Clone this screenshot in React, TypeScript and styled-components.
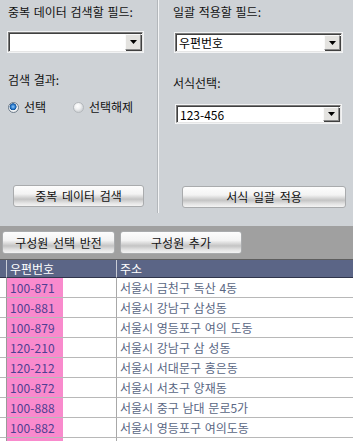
import React from "react";
import styled, { createGlobalStyle } from "styled-components";

const Global = createGlobalStyle`
  html, body { margin: 0; padding: 0; background: #ffffff; }
  * { box-sizing: border-box; }
`;

const FONT = `"Noto Sans CJK KR", "Noto Sans", sans-serif`;

const Page = styled.div`
  width: 353px;
  height: 441px;
  overflow: hidden;
  font-family: ${FONT};
  font-size: 12px;
  display: flex;
  flex-direction: column;
`;

const TopPanel = styled.div`
  height: 226px;
  flex: none;
  background: #ced2d6;
  display: grid;
  grid-template-columns: 157px 2px 1fr;
  align-items: start;
`;

const Pane = styled.div<{ $padLeft: number }>`
  display: flex;
  flex-direction: column;
  align-items: flex-start;
  padding: 5px 0 0 ${(p) => p.$padLeft}px;
`;

const Divider = styled.div`
  height: 213px;
  border-left: 1px solid #b3b7bb;
  border-right: 1px solid #f4f5f6;
`;

const Label = styled.div<{ $mt?: number; $ml?: number }>`
  margin-top: ${(p) => p.$mt ?? 0}px;
  margin-left: ${(p) => p.$ml ?? 0}px;
  line-height: 14px;
  height: 14px;
  color: #111;
  word-spacing: 1px;
  white-space: nowrap;
`;

const Combo = styled.div<{ $mt: number; $ml: number; $w: number; $h: number }>`
  margin-top: ${(p) => p.$mt}px;
  margin-left: ${(p) => p.$ml}px;
  width: ${(p) => p.$w}px;
  height: ${(p) => p.$h}px;
  background: #ffffff;
  border: 1px solid #7b7b7b;
  border-right-color: #e6e6e6;
  border-bottom-color: #e6e6e6;
  box-shadow: inset 1px 1px 0 #404040, 0 0 0 1px #f2f3f4;
  display: flex;
  align-items: stretch;
`;

const ComboText = styled.div`
  flex: 1;
  padding-left: 3px;
  color: #000;
  display: flex;
  align-items: center;
  white-space: nowrap;
`;

const DropBtn = styled.div`
  width: 16px;
  margin: 1px 1px 1px 0;
  background: #e4e3e0;
  border: 1px solid #8a8a8a;
  border-top-color: #fafafa;
  border-left-color: #fafafa;
  box-shadow: 1px 1px 0 #404040;
  display: flex;
  align-items: center;
  justify-content: center;
`;

const Arrow = () => (
  <svg width="7" height="4" viewBox="0 0 7 4">
    <polygon points="0,0 7,0 3.5,4" fill="#000" />
  </svg>
);

const RadioRow = styled.div`
  margin-top: 13px;
  display: flex;
  align-items: center;
  height: 14px;
`;

const RadioItem = styled.label<{ $w: number }>`
  display: flex;
  align-items: center;
  width: ${(p) => p.$w}px;
  gap: 5px;
  color: #111;
  line-height: 14px;
`;

const RadioDot = styled.span<{ $on: boolean }>`
  width: 11px;
  height: 11px;
  border-radius: 50%;
  border: 1px solid ${(p) => (p.$on ? "#6f7d8c" : "#b4b8bc")};
  background: ${(p) =>
    p.$on
      ? "radial-gradient(circle at 45% 42%, #8fcaff 0, #2a78c8 2.2px, #0b4f9a 3.2px, #f8f8f8 3.8px, #e2e4e6 5.5px)"
      : "radial-gradient(circle at 40% 35%, #ffffff 0, #f0f1f2 3px, #d2d5d8 5.5px)"};
  flex: none;
`;

const GlossButton = styled.div<{ $mt?: number; $ml?: number; $w: number; $h: number }>`
  margin-top: ${(p) => p.$mt ?? 0}px;
  margin-left: ${(p) => p.$ml ?? 0}px;
  width: ${(p) => p.$w}px;
  height: ${(p) => p.$h}px;
  border: 1px solid #a9abad;
  border-radius: 3px;
  background: linear-gradient(
    #fdfdfd 0%,
    #f3f3f3 40%,
    #d2d2d2 58%,
    #c4c4c4 66%,
    #e4e4e4 85%,
    #f4f4f4 100%
  );
  display: flex;
  align-items: center;
  justify-content: center;
  color: #111;
  line-height: 14px;
  word-spacing: 2px;
  white-space: nowrap;
  flex: none;
`;

const Toolbar = styled.div`
  height: 34px;
  flex: none;
  background: #a0a0a0;
  border-bottom: 1px solid #5e5e5e;
  display: flex;
  align-items: flex-start;
  gap: 5px;
  padding: 5px 2px 0;
`;

const Table = styled.div`
  display: grid;
  grid-template-columns: 7px 110px 1fr;
  grid-auto-rows: 20px;
  grid-template-rows: 18px;
`;

const HeadCell = styled.div<{ $last?: boolean }>`
  background: #5b6586;
  color: #ffffff;
  line-height: 17px;
  padding-left: 3px;
  border-right: ${(p) => (p.$last ? "none" : "1px solid #c9ccd6")};
  border-bottom: 1px solid #2f344a;
  white-space: nowrap;
`;

const RowHead = styled.div`
  background: #ffffff;
  border-right: 1px solid #9a9a9a;
  border-bottom: 1px solid #b8b8b8;
`;

const ZipCell = styled.div`
  background: #ffffff;
  border-right: 1px solid #a8a8a8;
  border-bottom: 1px solid #b8b8b8;
  display: flex;
`;

const ZipMark = styled.div`
  width: 56px;
  background: #f98acd;
  color: #4f3e92;
  padding-left: 3px;
  line-height: 19px;
  letter-spacing: 0.1px;
`;

const AddrCell = styled.div`
  background: #ffffff;
  color: #5a6784;
  border-bottom: 1px solid #b8b8b8;
  padding-left: 3px;
  line-height: 19px;
  word-spacing: 1px;
  white-space: nowrap;
`;

const rows = [
  ["100-871", "서울시 금천구 독산 4동"],
  ["100-881", "서울시 강남구 삼성동"],
  ["100-879", "서울시 영등포구 여의 도동"],
  ["120-210", "서울시 강남구 삼 성동"],
  ["120-212", "서울시 서대문구 홍은동"],
  ["100-872", "서울시 서초구 양재동"],
  ["100-888", "서울시 중구 남대 문로5가"],
  ["100-882", "서울시 영등포구 여의도동"],
  ["", ""],
];

export default function App() {
  return (
    <Page>
      <Global />
      <TopPanel>
        <Pane $padLeft={8}>
          <Label>중복 데이터 검색할 필드:</Label>
          <Combo $mt={13} $ml={0} $w={135} $h={20}>
            <ComboText />
            <DropBtn>
              <Arrow />
            </DropBtn>
          </Combo>
          <Label $mt={21}>검색 결과:</Label>
          <RadioRow>
            <RadioItem $w={65}>
              <RadioDot $on />
              선택
            </RadioItem>
            <RadioItem $w={80}>
              <RadioDot $on={false} />
              선택해제
            </RadioItem>
          </RadioRow>
          <GlossButton $mt={71} $ml={5} $w={131} $h={22}>
            중복 데이터 검색
          </GlossButton>
        </Pane>
        <Divider />
        <Pane $padLeft={14}>
          <Label>일괄 적용할 필드:</Label>
          <Combo $mt={14} $ml={2} $w={167} $h={19}>
            <ComboText>우편번호</ComboText>
            <DropBtn>
              <Arrow />
            </DropBtn>
          </Combo>
          <Label $mt={24}>서식선택:</Label>
          <Combo $mt={15} $ml={3} $w={165} $h={18}>
            <ComboText>123-456</ComboText>
            <DropBtn>
              <Arrow />
            </DropBtn>
          </Combo>
          <GlossButton $mt={63} $ml={9} $w={164} $h={22}>
            서식 일괄 적용
          </GlossButton>
        </Pane>
      </TopPanel>
      <Toolbar>
        <GlossButton $w={113} $h={23}>구성원 선택 반전</GlossButton>
        <GlossButton $w={122} $h={23}>구성원 추가</GlossButton>
      </Toolbar>
      <Table>
        <HeadCell />
        <HeadCell>우편번호</HeadCell>
        <HeadCell $last>주소</HeadCell>
        {rows.map(([zip, addr], i) => (
          <React.Fragment key={i}>
            <RowHead />
            <ZipCell>
              <ZipMark>{zip}</ZipMark>
            </ZipCell>
            <AddrCell>{addr}</AddrCell>
          </React.Fragment>
        ))}
      </Table>
    </Page>
  );
}
